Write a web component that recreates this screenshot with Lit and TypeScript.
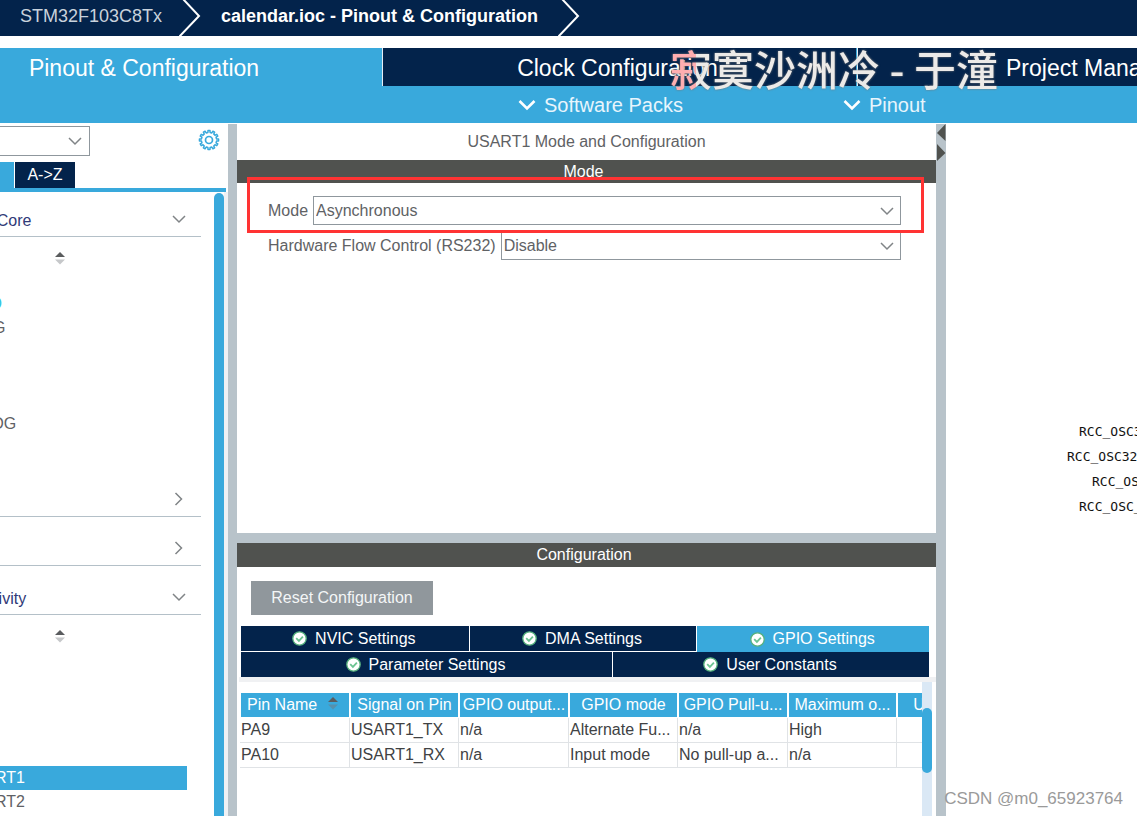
import { LitElement, html, css, svg } from "lit";
import { customElement } from "lit/decorators.js";
import { classMap } from "lit/directives/class-map.js";

const chevronDown = html`<svg class="chev" width="14" height="14" viewBox="0 0 14 14" aria-hidden="true">
  <path d="M1 4l6 6 6-6" fill="none" stroke="#808487" stroke-width="1.5" /></svg>`;
const chevronRight = html`<svg class="chev" width="14" height="14" viewBox="0 0 14 14" aria-hidden="true">
  <path d="M3.500 1l6 6-6 6" fill="none" stroke="#808487" stroke-width="1.5" /></svg>`;
const boldChevron = html`<svg width="18" height="12" viewBox="0 0 18 12" aria-hidden="true">
  <path d="M1.5 2L9 9.5 16.5 2" fill="none" stroke="#fff" stroke-width="2.6" /></svg>`;
const crumbArrow = html`<svg width="24" height="36" viewBox="0 0 24 36" aria-hidden="true">
  <path d="M4 -1L20 16 0 37" fill="none" stroke="#fff" stroke-width="2" /></svg>`;
const sortMark = (low: string) => html`<svg width="12" height="14" viewBox="0 0 12 14" aria-hidden="true">
  <path d="M1 6l5-5 5 5z" fill="#5a5c5e" /><path d="M1 8.500h10l-5 5z" fill=${low} /></svg>`;
const tick = html`<svg width="15" height="15" viewBox="0 0 15 15" aria-hidden="true">
  <circle cx="7.500" cy="7.500" r="6.700" fill="#fff" stroke="#55b07c" stroke-width="1.300" />
  <path d="M4.200 7.200l2.700 2.700 4-4.300" fill="none" stroke="#6cc492" stroke-width="1.800" /></svg>`;

// Twelve-toothed cog: four points per tooth, alternating outer and inner radius.
const cogPath = (() => {
  const teeth = 12;
  const points: string[] = [];
  for (let i = 0; i < teeth; i++) {
    const steps: [number, number][] = [[-0.28, 7.6], [-0.2, 9.6], [0.2, 9.6], [0.28, 7.6]];
    for (const [offset, radius] of steps) {
      const a = ((i + offset) / teeth) * Math.PI * 2;
      points.push(`${(11 + Math.sin(a) * radius).toFixed(2)} ${(11 - Math.cos(a) * radius).toFixed(2)}`);
    }
  }
  return `M${points.join("L")}Z`;
})();
const cog = html`<svg width="22" height="22" viewBox="0 0 22 22" aria-hidden="true">
  ${svg`<path d=${cogPath} fill="none" stroke="#39a9dc" stroke-width="1.5" stroke-linejoin="round" />`}
  <circle cx="11" cy="11" r="3.500" fill="none" stroke="#39a9dc" stroke-width="1.7" /></svg>`;

@customElement("top-bar")
class TopBar extends LitElement {
  static styles = css`
    :host { display: block; }
    .crumbs { display: flex; align-items: center; height: 36px; background: #03234b; color: #fff; padding-left: 20px; }
    .crumb { font-size: 18px; line-height: 32px; height: 36px; color: #fff; text-decoration: none; white-space: nowrap; }
    .chip { color: #c9d2dc; width: 159px; }
    .file { font-weight: bold; width: 337px; padding-left: 18px; }
    .crumbs svg { flex: none; }
    .tabs { margin-top: 12px; height: 75px; background: #39a9dc; display: grid;
      grid-template-columns: 381px 474px minmax(0, 1fr); grid-template-rows: 38px 37px; column-gap: 1px; overflow: hidden; }
    button { font: inherit; border: 0; margin: 0; background: none; color: #fff; white-space: nowrap; }
    .tab { font-size: 23px; padding: 2px 4px 0 0; background: #03234b; border-left: 1px solid #e6eef5; }
    .tab.current { background: none; border: 0; padding: 2px 93px 0 0; }
    .tab.last { text-align: left; padding-left: 148px; overflow: hidden; }
    .sub { grid-column: 2 / 4; display: flex; gap: 160px; padding-left: 136px; }
    .sub button { display: flex; align-items: center; gap: 8px; font-size: 20px; padding: 0; color: #e8f5fc; }
  `;
  render() {
    return html`
      <nav class="crumbs">
        <a class="crumb chip" href="#">STM32F103C8Tx</a>${crumbArrow}
        <a class="crumb file" href="#">calendar.ioc - Pinout &amp; Configuration</a>${crumbArrow}
      </nav>
      <div class="tabs">
        <button class="tab current">Pinout &amp; Configuration</button>
        <button class="tab">Clock Configuration</button>
        <button class="tab last">Project Manager</button>
        <div class="sub">
          <button>${boldChevron}Software Packs</button>
          <button>${boldChevron}Pinout</button>
        </div>
      </div>`;
  }
}

@customElement("side-list")
class SideList extends LitElement {
  static styles = css`
    :host { display: flex; flex-direction: column; overflow: hidden; background: #fff; color: #5f6265; }
    button { font: inherit; border: 0; margin: 0; padding: 0; background: none; color: inherit; }
    .search { display: flex; justify-content: space-between; padding: 2px 8px 0 0; height: 36px; }
    .combo { position: relative; display: grid; width: 90px; height: 30px; }
    select { appearance: none; font: inherit; background: #fff; border: 1px solid #8f979d; border-left: 0; border-radius: 0; }
    .combo .chev { position: absolute; right: 8px; top: 8px; }
    .gear { width: 22px; height: 32px; }
    .modes { display: flex; gap: 1px; height: 26px; border-bottom: 4px solid #39a9dc; margin-right: 2px; }
    .cat { width: 14px; background: #39a9dc; }
    .az { width: 60px; background: #03234b; color: #fff; }
    .scroll { flex: 1; display: grid; grid-template-columns: minmax(0, 1fr) 10px 4px; }
    .bar { background: #39a9dc; border-radius: 5px 5px 0 0; margin-top: 1px; }
    .edge { background: #eff1f4; }
    .tree { overflow: hidden; }
    .group { display: flex; justify-content: space-between; align-items: flex-end; height: 49px; width: 262px; margin-left: -61px;
      box-sizing: border-box; border-bottom: 1px solid #b4c0c8; padding: 0 15px 5px 0; color: #303a78; }
    .group.first { height: 45px; }
    .group .chev { margin-bottom: 5px; }
    .sort { display: flex; height: 55px; padding: 14px 0 0 54px; box-sizing: border-box; }
    .sort.far { height: 151px; }
    .item { display: block; height: 24px; line-height: 24px; width: 225px; margin-left: -38px; text-align: left; }
    .gpio { color: #35c5e0; }
    .gap { margin-top: 72px; margin-bottom: 32px; }
    .on { background: #39a9dc; color: #fff; }
  `;
  render() {
    return html`
      <div class="search">
        <label class="combo"><select aria-label="Search"><option></option></select>${chevronDown}</label>
        <button class="gear" aria-label="Settings">${cog}</button>
      </div>
      <div class="modes">
        <button class="cat" aria-label="Categories"></button>
        <button class="az">A-&gt;Z</button>
      </div>
      <div class="scroll">
        <div class="tree">
          <button class="group first">System Core${chevronDown}</button>
          <div class="sort">${sortMark("#c6c8ca")}</div>
          <button class="item gpio">GPIO</button>
          <button class="item">IWDG</button>
          <button class="item gap">WWDG</button>
          <button class="group"><span></span>${chevronRight}</button>
          <button class="group"><span></span>${chevronRight}</button>
          <button class="group">Connectivity${chevronDown}</button>
          <div class="sort far">${sortMark("#c6c8ca")}</div>
          <button class="item on">USART1</button>
          <button class="item">USART2</button>
        </div>
        <div class="bar"></div>
        <div class="edge"></div>
      </div>`;
  }
}

@customElement("mode-panel")
class ModePanel extends LitElement {
  static styles = css`
    :host { display: block; background: #fff; color: #5f6265; }
    .title { height: 36px; line-height: 36px; text-align: center; }
    .band { height: 23px; line-height: 23px; text-align: center; background: #50524f; color: #fff; padding-right: 6px; }
    .form { position: relative; padding: 13px 35px 0 31px; height: 350px; box-sizing: border-box; }
    .row { display: flex; align-items: center; gap: 5px; height: 29px; margin-bottom: 6px; }
    .pick { position: relative; flex: 1; display: grid; height: 29px; }
    select { appearance: none; font: inherit; color: inherit; background: #fff; border: 1px solid #8f979d; border-radius: 0; padding: 0 2px; }
    .chev { position: absolute; right: 7px; top: 8px; pointer-events: none; }
    .mark { position: absolute; left: 10px; right: 12px; top: -6px; height: 50px; border: 3px solid #ff3333; pointer-events: none; }
  `;
  render() {
    return html`
      <div class="title">USART1 Mode and Configuration</div>
      <div class="band">Mode</div>
      <div class="form">
        <div class="row"><label for="mode">Mode</label>
          <div class="pick"><select id="mode"><option>Asynchronous</option></select>${chevronDown}</div></div>
        <div class="row"><label for="flow">Hardware Flow Control (RS232)</label>
          <div class="pick"><select id="flow"><option>Disable</option></select>${chevronDown}</div></div>
        <div class="mark"></div>
      </div>`;
  }
}

@customElement("config-panel")
class ConfigPanel extends LitElement {
  static styles = css`
    :host { display: flex; flex-direction: column; background: #fff; color: #404244; overflow: hidden; }
    .band { height: 24px; line-height: 24px; text-align: center; background: #50524f; color: #fff; padding-right: 5px; }
    button { font: inherit; border: 0; margin: 0; padding: 0; color: #fff; }
    .reset { align-self: flex-start; width: 182px; height: 34px; margin: 14px 0 11px 14px; background: #90979c; color: #f4f6f7; }
    .tabs { display: grid; gap: 1px; margin: 0 7px 0 4px; }
    .line { display: grid; gap: 1px; height: 25px; }
    .three { grid-template-columns: 228fr 227fr 232fr; }
    .two { grid-template-columns: 371fr 316fr; }
    .tab { display: flex; align-items: center; justify-content: center; gap: 8px; background: #03234b; padding-right: 2px; }
    .tab.on { background: #39a9dc; margin-bottom: -1px; }
    .strip { height: 5px; margin-left: 2px; background: #f0f1f3; }
    .sheet { flex: 1; display: grid; grid-template-columns: minmax(0, 1fr) 10px; margin: 0 4px 0 3px; }
    .view { overflow: hidden; padding-top: 11px; }
    .track { background: #dae8f5; padding-top: 26px; }
    .thumb { height: 65px; border-radius: 5px; background: #39a9dc; }
    table { table-layout: fixed; width: 766px; border-collapse: separate; border-spacing: 0; }
    th, td { padding: 0 0 0 1px; font-weight: normal; text-align: left; white-space: nowrap; overflow: hidden; box-sizing: border-box; height: 25px; line-height: 24px; }
    th { padding: 0; text-align: center; color: #fff; background: #39a9dc; border: 1px solid #fff; border-top: 0; }
    th.sorted { text-align: left; padding-left: 6px; }
    th.sorted svg { margin-left: 10px; }
    td { border-right: 1px solid #e0e3e6; border-bottom: 1px solid #e0e3e6; }
    .wide { width: 110px; }
    .slim { width: 109px; }
  `;
  render() {
    const tab = (name: string, on = false) =>
      html`<button class=${classMap({ tab: true, on })}>${tick}${name}</button>`;
    const heads = ["Signal on Pin", "GPIO output...", "GPIO mode", "GPIO Pull-u...", "Maximum o...", "User Label"];
    const rows = [
      ["PA9", "USART1_TX", "n/a", "Alternate Fu...", "n/a", "High", ""],
      ["PA10", "USART1_RX", "n/a", "Input mode", "No pull-up a...", "n/a", ""],
    ];
    return html`
      <div class="band">Configuration</div>
      <button class="reset">Reset Configuration</button>
      <div class="tabs">
        <div class="line three">${tab("NVIC Settings")}${tab("DMA Settings")}${tab("GPIO Settings", true)}</div>
        <div class="line two">${tab("Parameter Settings")}${tab("User Constants")}</div>
      </div>
      <div class="strip"></div>
      <div class="sheet">
        <div class="view">
          <table>
            <colgroup>${[0, 1, 2, 3, 4, 5, 6].map((i) => html`<col class=${i % 2 ? "slim" : "wide"} />`)}</colgroup>
            <thead><tr><th class="sorted">Pin Name${sortMark("#5590ad")}</th>
              ${heads.map((h) => html`<th>${h}</th>`)}</tr></thead>
            <tbody>${rows.map((r) => html`<tr>${r.map((c) => html`<td>${c}</td>`)}</tr>`)}</tbody>
          </table>
        </div>
        <div class="track"><div class="thumb"></div></div>
      </div>`;
  }
}

@customElement("app-root")
class AppRoot extends LitElement {
  static styles = css`
    :host { position: relative; display: flex; flex-direction: column; min-height: 100vh; overflow: hidden; background: #fff;
      font: 16px/20px "Liberation Sans", Arial, sans-serif; }
    .body { flex: 1; display: grid; grid-template-columns: 228px minmax(0, 1fr) 191px; padding-top: 1px; }
    .centre { display: flex; flex-direction: column; border: solid #b8c3ca; border-width: 0 10px 0 9px; position: relative; }
    mode-panel { border-bottom: 10px solid #b8c3ca; }
    config-panel { flex: 1; }
    .arrows { position: absolute; right: -10px; top: 0; }
    .pins { display: flex; flex-direction: column; padding: 295px 0 0 121px; overflow: hidden; color: #111; }
    .pin { font: 13px/25px "DejaVu Sans Mono", monospace; white-space: nowrap; }
    .inset1 { padding-left: 12px; }
    .inset2 { padding-left: 25px; }
    .lyric { position: absolute; left: 670px; top: 36px; font: 500 42px/64px "Noto Sans CJK SC", sans-serif; white-space: nowrap;
      color: transparent; background: linear-gradient(90deg, #ffaeb0 26px, #eceae8 26px); background-clip: text; -webkit-background-clip: text;
      filter: drop-shadow(0 0 1px #777); pointer-events: none; }
    .credit { position: absolute; right: 14px; bottom: 7px; font-size: 17px; color: #9a9a9a; }
  `;
  render() {
    return html`
      <top-bar></top-bar>
      <div class="body">
        <side-list></side-list>
        <main class="centre">
          <mode-panel></mode-panel>
          <config-panel></config-panel>
          <svg class="arrows" width="10" height="38" viewBox="0 0 10 38" aria-hidden="true">
            <path d="M9.500 0v17L1 9z M1 20v17l8.500-8z" fill="#50524f" /></svg>
        </main>
        <div class="pins">
          <span class="pin inset1">RCC_OSC32_IN</span>
          <span class="pin">RCC_OSC32_OUT</span>
          <span class="pin inset2">RCC_OSC_IN</span>
          <span class="pin inset1">RCC_OSC_OUT</span>
        </div>
      </div>
      <div class="lyric">寂寞沙洲冷 - 于潼</div>
      <div class="credit">CSDN @m0_65923764</div>`;
  }
}
